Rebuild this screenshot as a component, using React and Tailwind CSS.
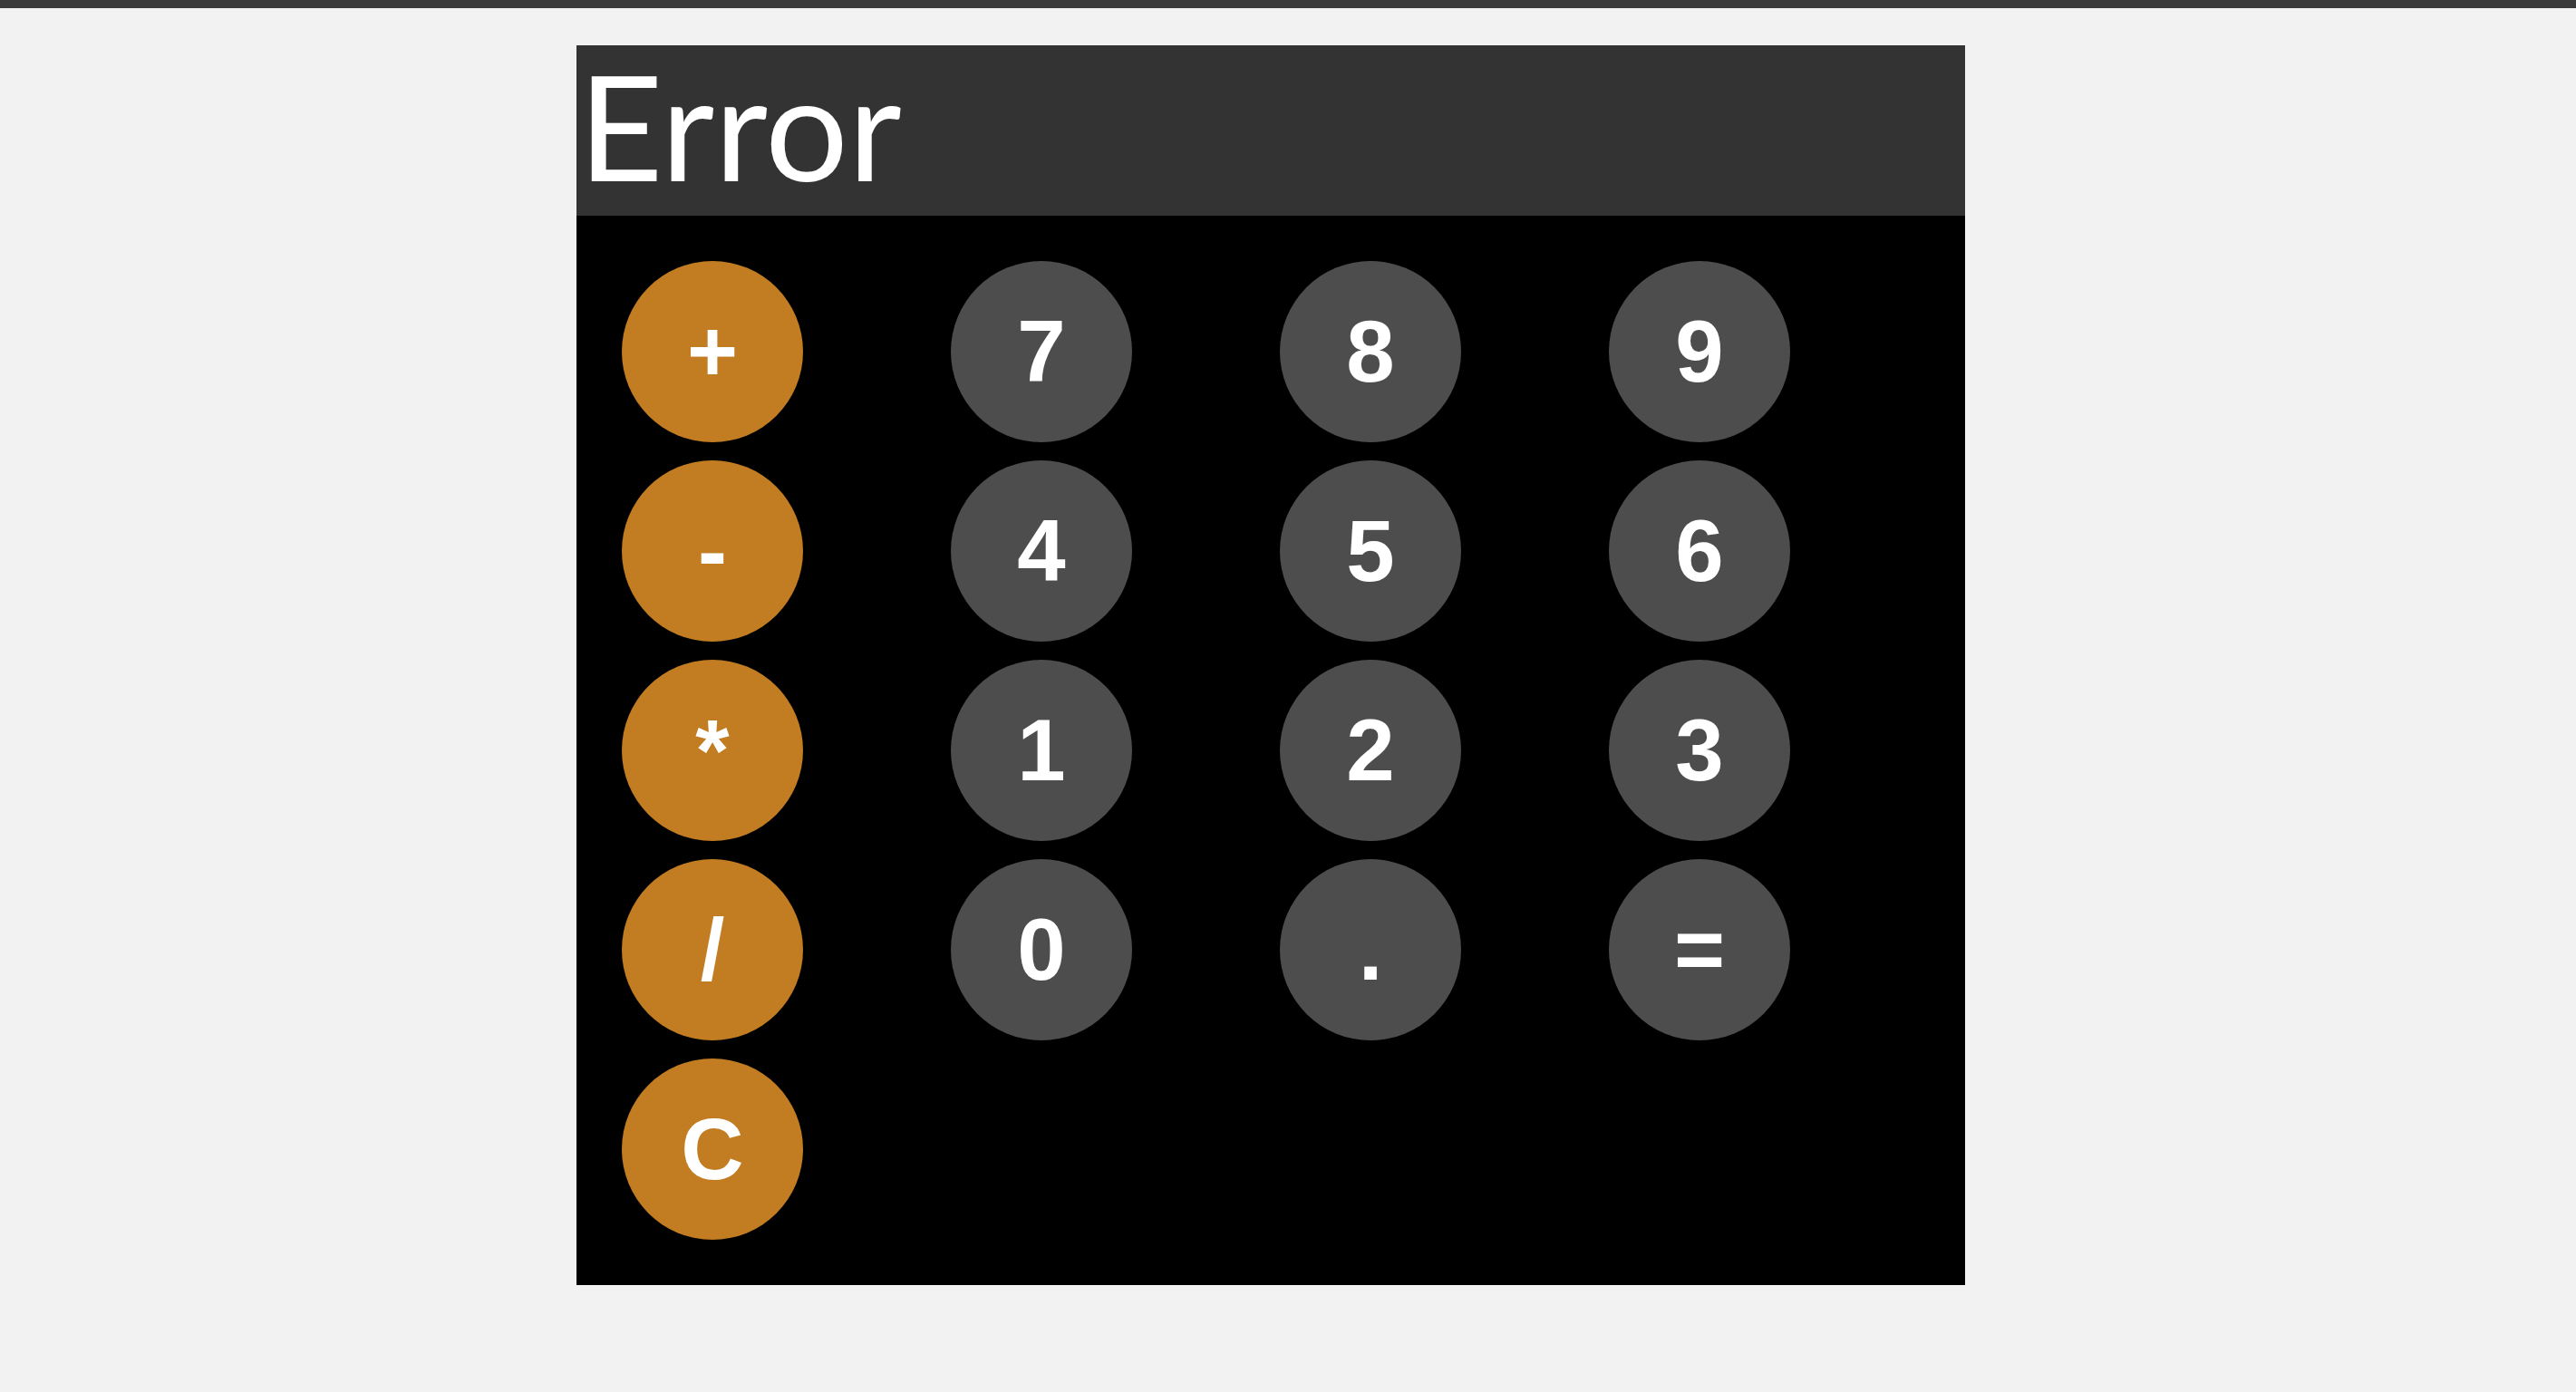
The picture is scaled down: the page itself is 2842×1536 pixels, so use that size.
import React from "react";

const rows = [
  ["+", "7", "8", "9"],
  ["-", "4", "5", "6"],
  ["*", "1", "2", "3"],
  ["/", "0", ".", "="],
  ["C"],
];

const ops = new Set(["+", "-", "*", "/", "C"]);

export default function App() {
  const keys = rows.flatMap((r) => {
    const cells = [...r];
    while (cells.length < 4) cells.push(null);
    return cells;
  });
  return (
    <div className="min-h-[1536px] w-full bg-[#f2f2f2]">
      <div className="h-[9px] w-full bg-[#3b3b3b]" />
      <div className="ml-[636px] mt-[41px] w-[1532px]">
        <div className="h-[188px] bg-[#333333]">
          <div className="text-white text-[162px] leading-[176px] pl-[2px] font-['Lato',sans-serif]">
            Error
          </div>
        </div>
        <div className="bg-black p-[50px] grid grid-cols-4 gap-[20px] font-['Liberation_Sans',Arial,sans-serif]">
          {keys.map((k, i) =>
            k === null ? (
              <div key={i} />
            ) : (
              <div
                key={i}
                className={`w-[200px] h-[200px] rounded-full flex items-center justify-center text-white font-bold text-[96px] font-['Liberation_Sans',Arial,sans-serif] ${
                  ops.has(k) ? "bg-[#c27c21]" : "bg-[#4d4d4d]"
                }`}
              >
                {k}
              </div>
            )
          )}
        </div>
      </div>
    </div>
  );
}
